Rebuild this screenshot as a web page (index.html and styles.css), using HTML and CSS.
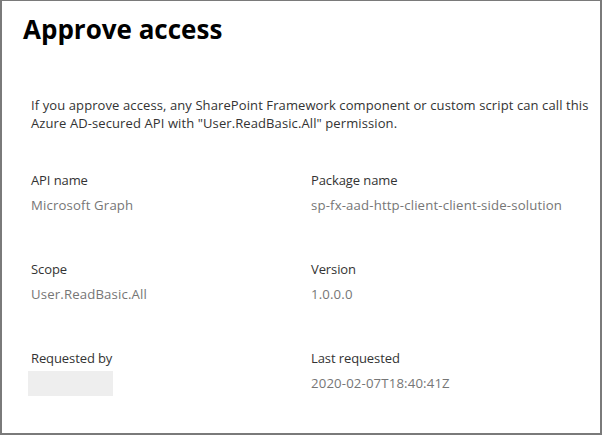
FILE: index.html
```html
<!DOCTYPE html>
<html lang="en">
<head>
<meta charset="utf-8">
<title>Approve access</title>
<link rel="stylesheet" href="styles.css">
</head>
<body>
<div class="dialog">
  <h1 class="title">Approve access</h1>
  <p class="intro">If you approve access, any SharePoint Framework component or custom script can call this Azure AD-secured API with "User.ReadBasic.All" permission.</p>
  <div class="fields">
    <div class="field">
      <div class="label">API name</div>
      <div class="value">Microsoft Graph</div>
    </div>
    <div class="field">
      <div class="label">Package name</div>
      <div class="value">sp-fx-aad-http-client-client-side-solution</div>
    </div>
    <div class="field">
      <div class="label">Scope</div>
      <div class="value">User.ReadBasic.All</div>
    </div>
    <div class="field">
      <div class="label">Version</div>
      <div class="value">1.0.0.0</div>
    </div>
    <div class="field">
      <div class="label">Requested by</div>
      <div class="value"><span class="redacted"></span></div>
    </div>
    <div class="field">
      <div class="label">Last requested</div>
      <div class="value">2020-02-07T18:40:41Z</div>
    </div>
  </div>
</div>
</body>
</html>
```
FILE: styles.css
```css
html, body {
  margin: 0;
  padding: 0;
  background: #ffffff;
}
.dialog {
  box-sizing: border-box;
  width: 602px;
  height: 435px;
  border: 2px solid #7a7a7a;
  border-top-width: 1px;
  background: #ffffff;
  font-family: "Open Sans", "Noto Sans", sans-serif;
  padding: 0 0 0 21px;
}
.title {
  margin: 10px 0 0 0;
  font-size: 26px;
  font-weight: 700;
  color: #000000;
  line-height: 36px;
  letter-spacing: 0;
}
.intro {
  width: 566px;
  margin: 49px 0 0 8px;
  font-size: 13px;
  line-height: 18px;
  color: #333333;
  letter-spacing: 0.1px;
}
.fields {
  margin: 39px 0 0 8px;
  display: grid;
  grid-template-columns: 280px 1fr;
  row-gap: 38px;
}
.label {
  font-size: 13px;
  line-height: 18px;
  color: #333333;
  letter-spacing: -0.1px;
}
.value {
  margin-top: 7px;
  font-size: 13.2px;
  line-height: 18px;
  height: 26px;
  color: #767676;
  letter-spacing: 0.15px;
}
.redacted {
  display: block;
  width: 85px;
  height: 25px;
  margin-left: -3px;
  margin-top: -3px;
  background: #eeeeee;
}
```
